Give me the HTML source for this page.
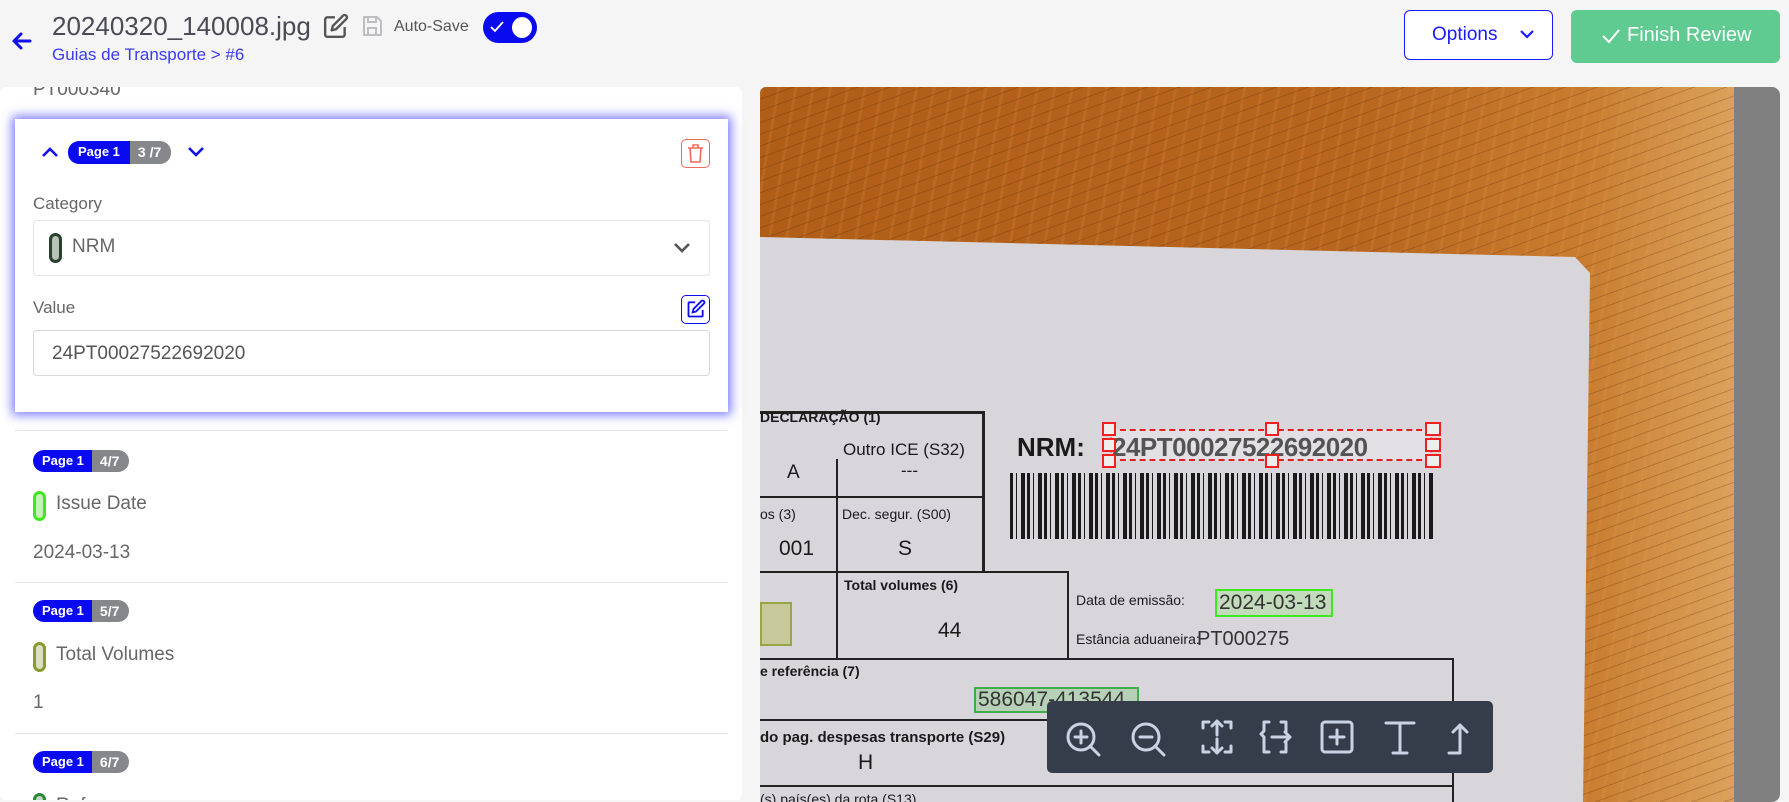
<!DOCTYPE html>
<html><head><meta charset="utf-8">
<style>
*{box-sizing:border-box;margin:0;padding:0}
body{width:1789px;height:802px;overflow:hidden;background:#f5f5f6;font-family:"Liberation Sans",sans-serif;position:relative;color:#555}
.a{position:absolute}
.badge{position:absolute;height:22px;border-radius:11px;overflow:hidden;display:flex;font-weight:bold;font-size:13px;color:#fff;line-height:22px}
.badge .p{background:#0a0af0;padding:0 8px 0 9px}
.badge .n{background:#86878b;padding:0 10px 0 8px;font-size:14px}
.pill{position:absolute;width:13px;border-radius:7px;border:3px solid}
.sep{position:absolute;left:15px;width:713px;height:1px;background:#e6e6ea}
.doc{position:absolute;color:#1a1a1a;font-family:"Liberation Sans Narrow","Liberation Sans",sans-serif;white-space:nowrap}
.ln{position:absolute;background:#222}
</style></head><body>

<!-- header -->
<svg class="a" style="left:11px;top:30px" width="22" height="22" viewBox="0 0 22 22"><path d="M19 11H4M10 4l-7 7 7 7" stroke="#1010ee" stroke-width="3" fill="none" stroke-linecap="round" stroke-linejoin="round"/></svg>
<div class="a" style="left:52px;top:11px;font-size:26px;color:#4a4a55">20240320_140008.jpg</div>
<svg class="a" style="left:323px;top:13px" width="26" height="26" viewBox="0 0 24 24"><path d="M11 4H4a2 2 0 0 0-2 2v14a2 2 0 0 0 2 2h14a2 2 0 0 0 2-2v-7" stroke="#555" stroke-width="2.2" fill="none"/><path d="M18.5 2.5a2.1 2.1 0 0 1 3 3L12 15l-4 1 1-4z" stroke="#555" stroke-width="2.2" fill="none" stroke-linejoin="round"/></svg>
<svg class="a" style="left:360px;top:14px" width="24" height="24" viewBox="0 0 24 24"><path d="M4 3h13l4 4v14H4z" stroke="#bdbdc2" stroke-width="2" fill="none" stroke-linejoin="round"/><path d="M8 3v5h8V3M8 21v-7h8v7" stroke="#bdbdc2" stroke-width="2" fill="none"/></svg>
<div class="a" style="left:394px;top:18px;font-size:16px;color:#555">Auto-Save</div>
<div class="a" style="left:483px;top:12px;width:54px;height:31px;border-radius:16px;background:#0a0af0"></div>
<svg class="a" style="left:489px;top:20px" width="16" height="14" viewBox="0 0 16 14"><path d="M2 7l4 4 8-9" stroke="#fff" stroke-width="1.8" fill="none"/></svg>
<div class="a" style="left:512px;top:17px;width:20px;height:21px;border-radius:50%;background:#fff"></div>
<div class="a" style="left:52px;top:45px;font-size:17px;color:#3a3af0">Guias de Transporte &gt; #6</div>

<div class="a" style="left:1404px;top:10px;width:149px;height:50px;border:1.5px solid #1a1aff;border-radius:6px;background:#fff"></div>
<div class="a" style="left:1432px;top:24px;font-size:19px;color:#1a1aff">Options</div>
<svg class="a" style="left:1519px;top:28px" width="16" height="12" viewBox="0 0 16 12"><path d="M2 3l6 6 6-6" stroke="#1a1aff" stroke-width="2.2" fill="none"/></svg>
<div class="a" style="left:1571px;top:10px;width:209px;height:53px;border-radius:6px;background:#5fcb91"></div>
<svg class="a" style="left:1601px;top:27px" width="20" height="18" viewBox="0 0 20 18"><path d="M2 9l6 6 10-12" stroke="#fff" stroke-width="2" fill="none"/></svg>
<div class="a" style="left:1627px;top:24px;font-size:20px;color:#fff">Finish Review</div>

<!-- left panel -->
<div class="a" style="left:0;top:87px;width:742px;height:713px;background:#fff;border-radius:6px;overflow:hidden">
  <div class="a" style="left:33px;top:-8px;font-size:19px;color:#666">PT000340</div>
  <div class="sep" style="top:343px"></div>
  <div class="badge" style="left:33px;top:363px"><span class="p">Page 1</span><span class="n">4/7</span></div>
  <div class="pill" style="left:33px;top:404px;height:30px;border-color:#3ee81e;background:#c4f2b8"></div>
  <div class="a" style="left:56px;top:406px;font-size:19px;color:#666">Issue Date</div>
  <div class="a" style="left:33px;top:455px;font-size:19px;color:#666">2024-03-13</div>
  <div class="sep" style="top:495px"></div>
  <div class="badge" style="left:33px;top:513px"><span class="p">Page 1</span><span class="n">5/7</span></div>
  <div class="pill" style="left:33px;top:555px;height:30px;border-color:#8a9a32;background:#dcdfc4"></div>
  <div class="a" style="left:56px;top:557px;font-size:19px;color:#666">Total Volumes</div>
  <div class="a" style="left:33px;top:605px;font-size:19px;color:#666">1</div>
  <div class="sep" style="top:646px"></div>
  <div class="badge" style="left:33px;top:664px"><span class="p">Page 1</span><span class="n">6/7</span></div>
  <div class="pill" style="left:33px;top:706px;height:30px;border-color:#2a8a3a;background:#bfd8c2"></div>
  <div class="a" style="left:56px;top:708px;font-size:19px;color:#666">Ref</div>
</div>

<!-- active card -->
<div class="a" style="left:15px;top:119px;width:713px;height:293px;background:#fff;box-shadow:0 0 10px 3px #7b7bff"></div>
<svg class="a" style="left:40px;top:145px" width="20" height="14" viewBox="0 0 20 14"><path d="M3 11l7-7 7 7" stroke="#1010ee" stroke-width="2.6" fill="none"/></svg>
<div class="badge" style="left:68px;top:141px;height:23px"><span class="p" style="padding:0 10px">Page 1</span><span class="n" style="padding:0 10px 0 8px">3 /7</span></div>
<svg class="a" style="left:186px;top:145px" width="20" height="14" viewBox="0 0 20 14"><path d="M3 3l7 7 7-7" stroke="#1010ee" stroke-width="2.6" fill="none"/></svg>
<div class="a" style="left:681px;top:139px;width:29px;height:29px;border:1.3px solid #f06a5a;border-radius:5px"></div>
<svg class="a" style="left:686px;top:143px" width="19" height="21" viewBox="0 0 19 21"><path d="M2 5h15M7 5V2h5v3M4 5l1 14h9l1-14" stroke="#f06a5a" stroke-width="1.6" fill="none"/></svg>
<div class="a" style="left:33px;top:194px;font-size:17px;color:#666">Category</div>
<div class="a" style="left:33px;top:220px;width:677px;height:56px;border:1px solid #e4e4e8;border-radius:4px"></div>
<div class="pill" style="left:49px;top:233px;height:30px;border-color:#26402c;background:#b8c2b8"></div>
<div class="a" style="left:72px;top:236px;font-size:19px;color:#666">NRM</div>
<svg class="a" style="left:672px;top:241px" width="20" height="14" viewBox="0 0 20 14"><path d="M3 3l7 7 7-7" stroke="#555" stroke-width="2.6" fill="none"/></svg>
<div class="a" style="left:33px;top:298px;font-size:17px;color:#666">Value</div>
<div class="a" style="left:681px;top:295px;width:29px;height:29px;border:1.5px solid #1010ee;border-radius:5px"></div>
<svg class="a" style="left:686px;top:299px" width="20" height="20" viewBox="0 0 24 24"><path d="M11 4H4a1 1 0 0 0-1 1v15a1 1 0 0 0 1 1h15a1 1 0 0 0 1-1v-7" stroke="#1010ee" stroke-width="2.2" fill="none"/><path d="M18.5 2.5a2.1 2.1 0 0 1 3 3L12 15l-4 1 1-4z" stroke="#1010ee" stroke-width="2.2" fill="none"/></svg>
<div class="a" style="left:33px;top:330px;width:677px;height:46px;border:1px solid #d8d8dc;border-radius:4px"></div>
<div class="a" style="left:52px;top:343px;font-size:19px;color:#555">24PT00027522692020</div>

<!-- image panel -->
<div class="a" style="left:760px;top:87px;width:1020px;height:715px;background:#808080;border-radius:6px 8px 8px 0;overflow:hidden">
 <div class="a" style="left:0;top:0;width:974px;height:715px;overflow:hidden;background:linear-gradient(90deg,#b05d18 0%,#b8651e 60%,#c97d30 85%,#dba25c 100%)">
  <div class="a" style="left:0;top:0;width:974px;height:715px;background-image:repeating-linear-gradient(160deg,rgba(80,35,5,0.25) 0 1px,transparent 1px 11px),repeating-linear-gradient(100deg,rgba(230,160,80,0.15) 0 3px,transparent 3px 17px)"></div>
  <svg class="a" style="left:0;top:0" width="974" height="715"><polygon points="0,150 815,170 830,186 823,715 0,715" fill="#d9d6db"/></svg>
  <div class="ln" style="left:0;top:324px;width:223px;height:3px"></div>
  <div class="ln" style="left:222px;top:324px;width:3px;height:160px"></div>
  <div class="ln" style="left:76px;top:372px;width:2px;height:200px"></div>
  <div class="ln" style="left:0;top:409px;width:223px;height:2px"></div>
  <div class="ln" style="left:0;top:484px;width:309px;height:2px"></div>
  <div class="ln" style="left:307px;top:484px;width:2px;height:88px"></div>
  <div class="ln" style="left:0;top:571px;width:694px;height:2px"></div>
  <div class="ln" style="left:692px;top:571px;width:2px;height:144px"></div>
  <div class="ln" style="left:0;top:632px;width:694px;height:2px"></div>
  <div class="ln" style="left:0;top:698px;width:694px;height:2px"></div>
  <div class="doc" style="left:0;top:322px;font-size:14px;font-weight:bold">DECLARAÇÃO (1)</div>
  <div class="doc" style="left:83px;top:353px;font-size:17px">Outro ICE (S32)</div>
  <div class="doc" style="left:27px;top:375px;font-size:19px">A</div>
  <div class="doc" style="left:141px;top:374px;font-size:17px">---</div>
  <div class="doc" style="left:0;top:419px;font-size:14px">os (3)</div>
  <div class="doc" style="left:82px;top:419px;font-size:14px">Dec. segur. (S00)</div>
  <div class="doc" style="left:19px;top:450px;font-size:21px">001</div>
  <div class="doc" style="left:138px;top:450px;font-size:21px">S</div>
  <div class="doc" style="left:84px;top:490px;font-size:14px;font-weight:bold">Total volumes (6)</div>
  <div class="doc" style="left:178px;top:532px;font-size:21px">44</div>
  <div class="a" style="left:0;top:515px;width:32px;height:44px;background:#c8c99a;border:2px solid #9aa545"></div>
  <div class="doc" style="left:0;top:576px;font-size:14px;font-weight:bold">e referência (7)</div>
  <div class="doc" style="left:0;top:642px;font-size:15px;font-weight:bold">do pag. despesas transporte (S29)</div>
  <div class="doc" style="left:98px;top:664px;font-size:21px">H</div>
  <div class="doc" style="left:0;top:704px;font-size:14px">(s) país(es) da rota (S13)</div>
  <div class="doc" style="left:257px;top:345px;font-size:26px;font-weight:bold">NRM:</div>
  <div class="doc" style="left:352px;top:345px;font-size:26px;font-weight:bold;letter-spacing:-0.5px">24PT00027522692020</div>
  <div class="a" style="left:350px;top:342px;width:322px;height:32px;border:2px dashed #e02020;background:rgba(255,255,255,0.25)"></div>
  <div class="a" style="left:342px;top:335px;width:14px;height:14px;border:2px solid #f02020;background:#eee"></div>
  <div class="a" style="left:342px;top:351px;width:14px;height:14px;border:2px solid #f02020;background:#eee"></div>
  <div class="a" style="left:342px;top:367px;width:14px;height:14px;border:2px solid #f02020;background:#eee"></div>
  <div class="a" style="left:505px;top:335px;width:14px;height:14px;border:2px solid #f02020;background:#eee"></div>
  <div class="a" style="left:505px;top:367px;width:14px;height:14px;border:2px solid #f02020;background:#eee"></div>
  <div class="a" style="left:665px;top:335px;width:16px;height:14px;border:2px solid #f02020;background:#eee"></div>
  <div class="a" style="left:665px;top:351px;width:16px;height:14px;border:2px solid #f02020;background:#eee"></div>
  <div class="a" style="left:665px;top:367px;width:16px;height:14px;border:2px solid #f02020;background:#eee"></div>
  <div class="a" style="left:250px;top:386px;width:424px;height:66px;background:repeating-linear-gradient(90deg,#1a1a1a 0 3px,transparent 3px 6px,#1a1a1a 6px 7px,transparent 7px 11px,#1a1a1a 11px 15px,transparent 15px 17px)"></div>
  <div class="doc" style="left:316px;top:505px;font-size:14px">Data de emissão:</div>
  <div class="a" style="left:455px;top:502px;width:118px;height:28px;border:2px solid #3ee81e;background:rgba(150,230,130,0.35)"></div>
  <div class="doc" style="left:459px;top:504px;font-size:21px;color:#333">2024-03-13</div>
  <div class="doc" style="left:316px;top:544px;font-size:14px">Estância aduaneira:</div>
  <div class="doc" style="left:437px;top:541px;font-size:20px;color:#333">PT000275</div>
  <div class="a" style="left:214px;top:600px;width:165px;height:26px;border:2px solid #3fae48;background:rgba(120,200,120,0.35)"></div>
  <div class="doc" style="left:218px;top:601px;font-size:21px;color:#333">586047-413544</div>
 </div>
</div>

<!-- toolbar -->
<div class="a" style="left:1047px;top:701px;width:446px;height:72px;background:#343d49;border-radius:5px"></div>
<svg class="a" style="left:1047px;top:701px" width="446" height="72" viewBox="0 0 446 72" fill="none" stroke="#c9d3e3" stroke-width="3" stroke-linecap="round" stroke-linejoin="round">
 <circle cx="34" cy="36" r="13"/><path d="M43 45l9 9M34 30v12M28 36h12"/>
 <circle cx="99" cy="36" r="13"/><path d="M108 45l9 9M93 36h12"/>
 <path d="M156 27v-6h6M178 21h6v6M156 45v6h6M178 51h6v-6M170 20v14M165 25l5-5 5 5M170 38v14M165 47l5 5 5-5"/>
 <path d="M222 21h-5v9l-3 3 3 3v15h5M234 21h5v9M234 51h5v-9M225 36h18M238 31l5 5-5 5"/>
 <rect x="275" y="21" width="30" height="30" rx="3"/><path d="M290 29v14M283 36h14"/>
 <path d="M339 22h28M353 22v30M346 52h14"/>
 <path d="M402 52h11v-28M406 31l7-7 7 7"/>
</svg>
</body></html>
